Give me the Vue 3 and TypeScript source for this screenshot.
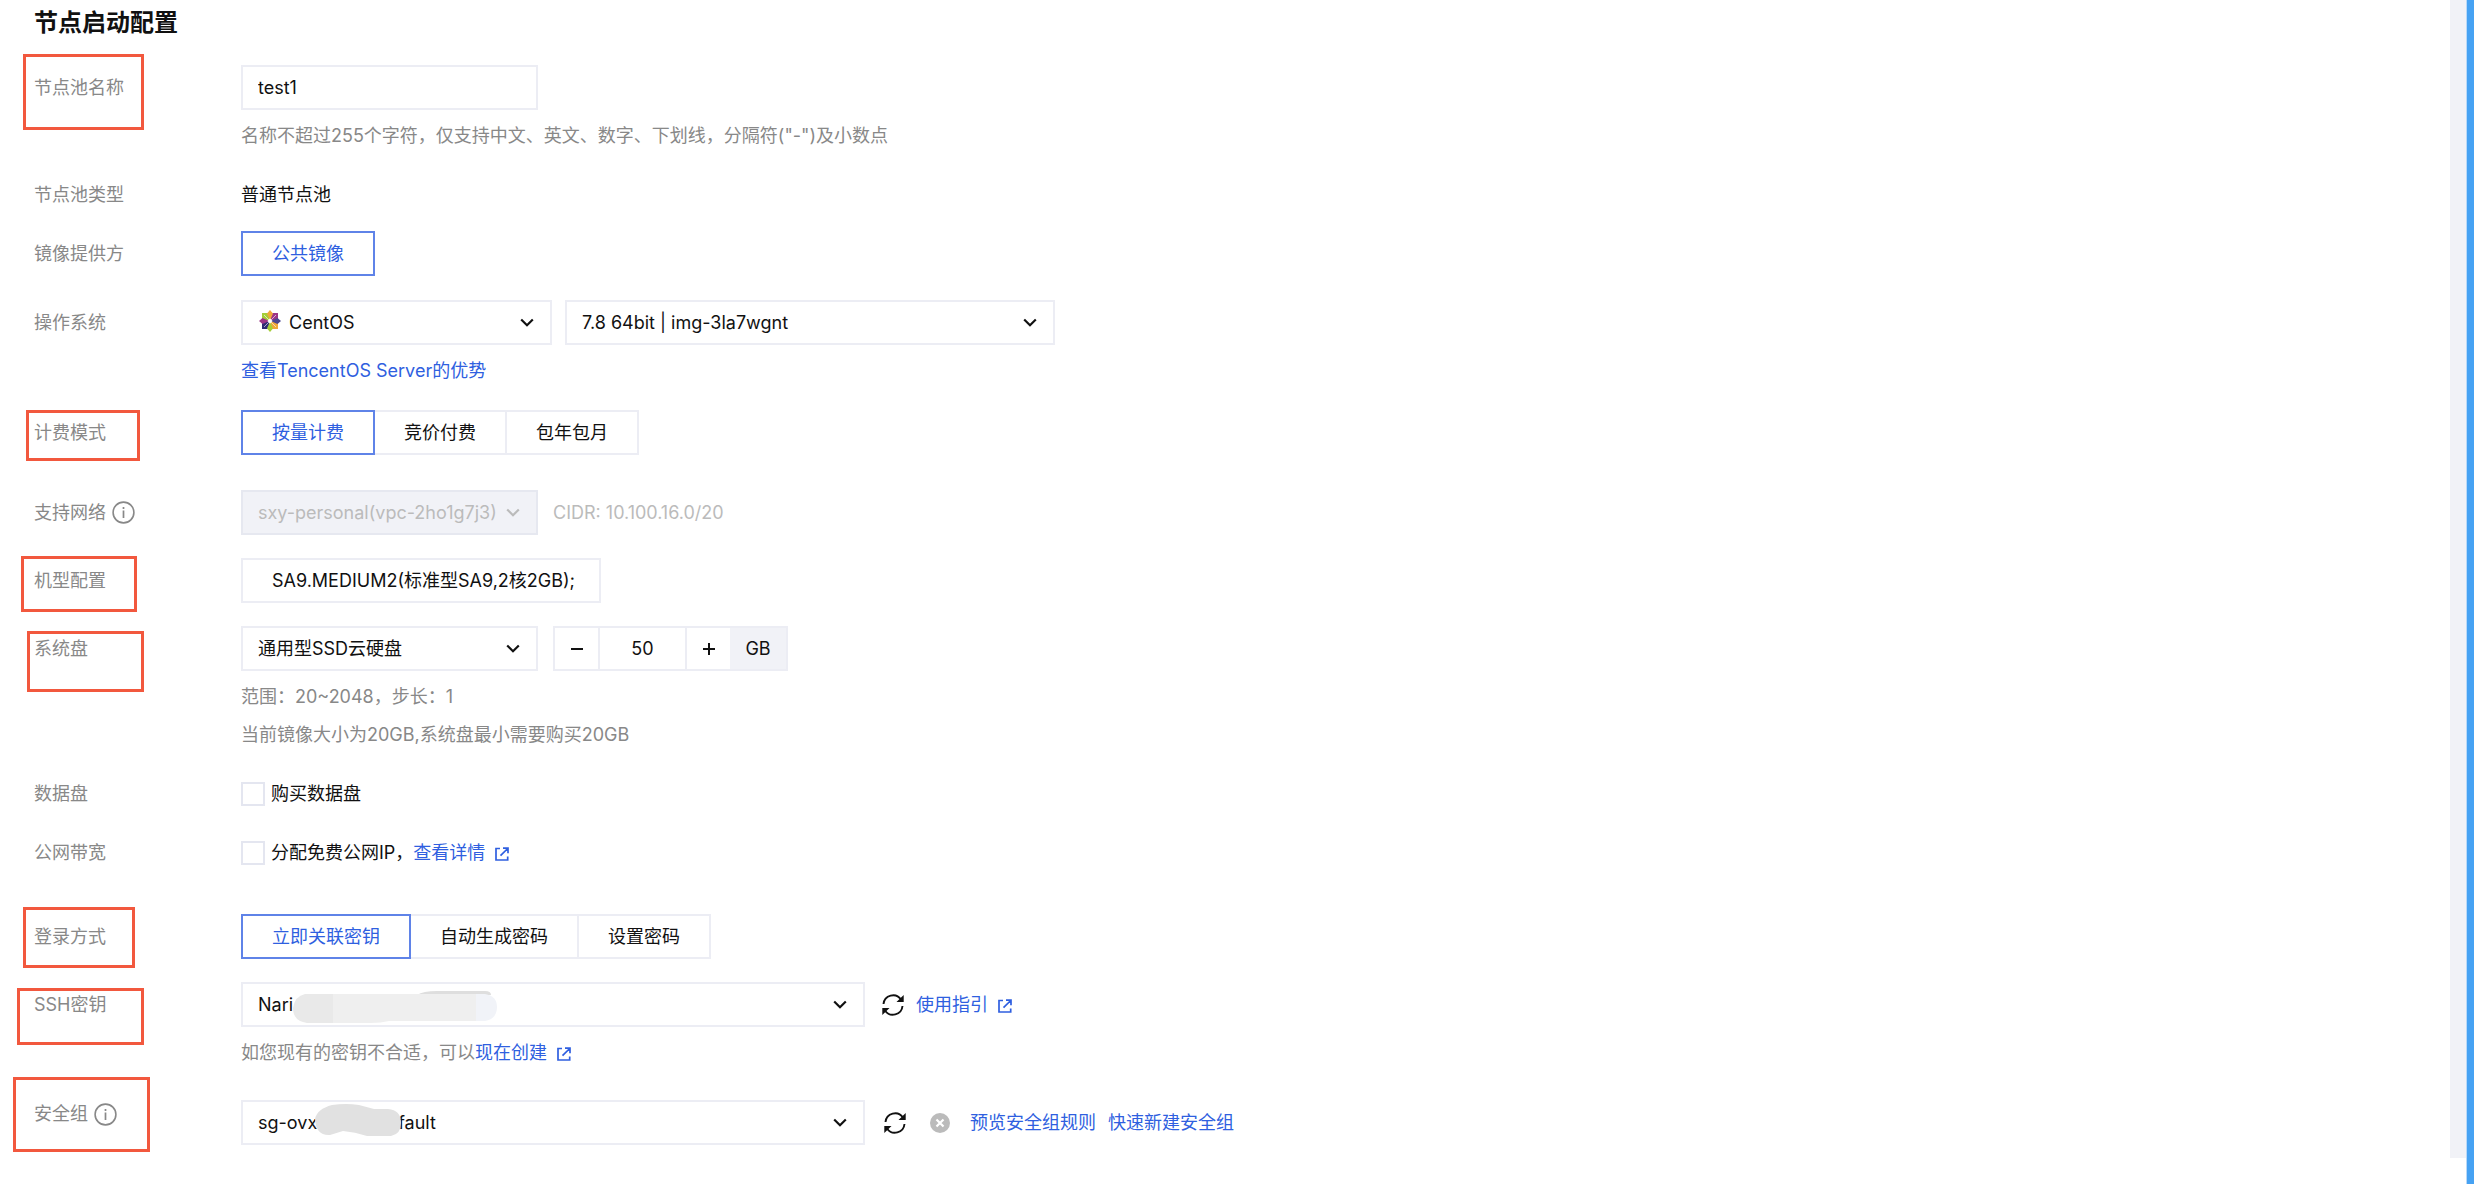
<script setup lang="ts">
import { ref } from 'vue'

interface Mark {
  left: number
  top: number
  width: number
  height: number
}

const poolName = ref('test1')
const diskSize = ref('50')
const billing = ref('按量计费')
const login = ref('立即关联密钥')
const buyDisk = ref(false)
const publicIp = ref(false)

const billingModes: string[] = ['按量计费', '竞价付费', '包年包月']
const loginModes: string[] = ['立即关联密钥', '自动生成密码', '设置密码']

const securityGroup = 'sg-ovx' + '\u00a0'.repeat(16) + 'fault'

// Red frames drawn over the labels that need attention
const marks: Mark[] = [
  { left: 23, top: 54, width: 121, height: 76 },
  { left: 26, top: 410, width: 114, height: 51 },
  { left: 21, top: 556, width: 116, height: 56 },
  { left: 27, top: 631, width: 117, height: 61 },
  { left: 23, top: 907, width: 112, height: 61 },
  { left: 17, top: 988, width: 127, height: 57 },
  { left: 13, top: 1077, width: 137, height: 75 },
]

function step(delta: number): void {
  const next = Number(diskSize.value) + delta
  diskSize.value = String(Math.min(2048, Math.max(20, next)))
}
</script>

<template>
  <div class="page">
    <svg class="defs" aria-hidden="true">
      <symbol id="chevron" viewBox="0 0 14 9">
        <path d="M1.2 1.5 7 7.2l5.800-5.700" fill="none" stroke="currentColor" stroke-width="2.200" />
      </symbol>
      <symbol id="info" viewBox="0 0 23 23">
        <circle cx="11.500" cy="11.500" r="10.400" fill="none" stroke="currentColor" stroke-width="1.600" />
        <path d="M11.500 9.500v7.500M11.500 6v2" fill="none" stroke="currentColor" stroke-width="1.700" />
      </symbol>
      <symbol id="external" viewBox="0 0 14 14">
        <path d="M5 1.500H1v11.500h11.700V9.500M8 1.200h5v5M12.700 1.500 5.500 8.700" fill="none" stroke="currentColor" stroke-width="1.700" />
      </symbol>
      <symbol id="refresh" viewBox="0 0 22 22">
        <path d="M1.500 10a9.600 9.600 0 0 1 17.500-4.500M20.500 12a9.600 9.600 0 0 1-17.500 4.500" fill="none" stroke="currentColor" stroke-width="1.900" />
        <path d="M21.700 1v7h-7.200ZM.3 21v-7h7.200Z" fill="currentColor" />
      </symbol>
      <symbol id="clear" viewBox="0 0 20 20">
        <circle cx="10" cy="10" r="10" fill="#bbbbbb" />
        <path d="m6.500 6.500 7 7m0-7-7 7" fill="none" stroke="#fff" stroke-width="2.200" />
      </symbol>
    </svg>

    <main class="content">
      <h1 class="title">节点启动配置</h1>

      <form class="form" @submit.prevent>
        <div class="row">
          <label class="label" for="pool-name">节点池名称</label>
          <div class="field">
            <input id="pool-name" v-model="poolName" class="box w-medium" type="text" />
            <p class="hint">名称不超过255个字符，仅支持中文、英文、数字、下划线，分隔符("-")及小数点</p>
          </div>
        </div>

        <div class="row gap-lg">
          <span class="label label-text">节点池类型</span>
          <div class="field"><p class="value">普通节点池</p></div>
        </div>

        <div class="row gap-md">
          <span id="provider" class="label">镜像提供方</span>
          <div class="field">
            <div class="segment" role="group" aria-labelledby="provider">
              <button type="button" class="seg active">公共镜像</button>
            </div>
          </div>
        </div>

        <div class="row gap-md">
          <label class="label" for="os">操作系统</label>
          <div class="field">
            <div class="line">
              <span class="select w-os">
                <svg class="os-logo" viewBox="0 0 22 22" aria-hidden="true">
                  <path d="M3 3h7.500v7.500H3z" fill="#a5cd39" />
                  <path d="M11.500 3H19v7.500h-7.500z" fill="#9c3587" />
                  <path d="M11.500 11.500H19V19h-7.500z" fill="#efa83a" />
                  <path d="M3 11.500h7.500V19H3z" fill="#2f2b75" />
                  <path d="m11 0 3 3.500-3 7-3-7z" fill="#efa83a" />
                  <path d="m22 11-3.500 3-7-3 7-3z" fill="#4b4690" />
                  <path d="m11 22-3-3.500 3-7 3 7z" fill="#a5cd39" />
                  <path d="m0 11 3.500-3 7 3-7 3z" fill="#9c3587" />
                  <path d="m5 5 12 12M17 5 5 17" stroke="#fff" stroke-width="1" opacity=".6" />
                  <path d="m11 8.500 2.500 2.500-2.500 2.500L8.500 11z" fill="#fff" />
                </svg>
                <select id="os" class="box with-logo"><option>CentOS</option></select>
                <svg class="chevron"><use href="#chevron" /></svg>
              </span>
              <span class="select w-version">
                <select class="box" aria-label="系统版本"><option>7.8 64bit | img-3la7wgnt</option></select>
                <svg class="chevron"><use href="#chevron" /></svg>
              </span>
            </div>
            <p class="hint"><a href="#">查看TencentOS Server的优势</a></p>
          </div>
        </div>

        <div class="row gap-mid">
          <span id="billing" class="label">计费模式</span>
          <div class="field">
            <div class="segment" role="group" aria-labelledby="billing">
              <button
                v-for="mode in billingModes"
                :key="mode"
                type="button"
                class="seg"
                :class="{ active: billing === mode }"
                @click="billing = mode"
              >{{ mode }}</button>
            </div>
          </div>
        </div>

        <div class="row gap-lg">
          <label class="label" for="network">支持网络<svg class="info"><use href="#info" /></svg></label>
          <div class="field">
            <div class="line line-wide">
              <span class="select w-medium">
                <select id="network" class="box" disabled><option>sxy-personal(vpc-2ho1g7j3)</option></select>
                <svg class="chevron muted"><use href="#chevron" /></svg>
              </span>
              <span class="muted">CIDR: 10.100.16.0/20</span>
            </div>
          </div>
        </div>

        <div class="row gap-sm">
          <span id="machine" class="label">机型配置</span>
          <div class="field">
            <div class="segment">
              <button type="button" class="seg seg-machine" aria-describedby="machine">SA9.MEDIUM2(标准型SA9,2核2GB);</button>
            </div>
          </div>
        </div>

        <div class="row gap-sm">
          <label class="label" for="disk">系统盘</label>
          <div class="field">
            <div class="line line-wide">
              <span class="select w-medium">
                <select id="disk" class="box"><option>通用型SSD云硬盘</option></select>
                <svg class="chevron"><use href="#chevron" /></svg>
              </span>
              <div class="stepper">
                <button type="button" class="step" aria-label="减少" @click="step(-1)">
                  <svg viewBox="0 0 12 12"><path d="M0 6h12" stroke="currentColor" stroke-width="2" /></svg>
                </button>
                <input v-model="diskSize" class="amount" type="text" aria-label="系统盘大小" />
                <button type="button" class="step" aria-label="增加" @click="step(1)">
                  <svg viewBox="0 0 12 12"><path d="M0 6h12M6 0v12" stroke="currentColor" stroke-width="2" /></svg>
                </button>
                <span class="unit">GB</span>
              </div>
            </div>
            <p class="hint">范围：20~2048，步长：1</p>
            <p class="hint">当前镜像大小为20GB,系统盘最小需要购买20GB</p>
          </div>
        </div>

        <div class="row gap-lg">
          <span class="label label-text">数据盘</span>
          <div class="field">
            <label class="check"><input v-model="buyDisk" type="checkbox" />购买数据盘</label>
          </div>
        </div>

        <div class="row gap-lg">
          <span class="label label-text">公网带宽</span>
          <div class="field check-line">
            <label class="check"><input v-model="publicIp" type="checkbox" />分配免费公网IP，</label>
            <a href="#">查看详情<svg class="external"><use href="#external" /></svg></a>
          </div>
        </div>

        <div class="row gap-xl">
          <span id="login" class="label">登录方式</span>
          <div class="field">
            <div class="segment" role="group" aria-labelledby="login">
              <button
                v-for="mode in loginModes"
                :key="mode"
                type="button"
                class="seg"
                :class="{ active: login === mode }"
                @click="login = mode"
              >{{ mode }}</button>
            </div>
          </div>
        </div>

        <div class="row gap-sm">
          <label class="label" for="ssh">SSH密钥</label>
          <div class="field">
            <div class="line">
              <span class="select w-large">
                <select id="ssh" class="box"><option>Nari</option></select>
                <svg class="smudge smudge-key" viewBox="0 0 206 34" aria-hidden="true">
                  <path d="M126 5q6-4 20-4h48q6 0 6 4z" fill="#dedede" />
                  <path d="M14 4h29v29H16Q2 31 2 18 4 6 14 4z" fill="#e9e9e9" />
                  <path d="M42 4h144v27h-88q-8 2-18 2H42z" fill="#efefef" />
                  <path d="M185 4h9q12 2 12 13 0 12-12 14h-9z" fill="#f1f3f8" />
                </svg>
                <svg class="chevron"><use href="#chevron" /></svg>
              </span>
              <div class="actions">
                <button type="button" class="icon-btn" aria-label="刷新密钥"><svg class="refresh"><use href="#refresh" /></svg></button>
                <a href="#">使用指引<svg class="external"><use href="#external" /></svg></a>
              </div>
            </div>
            <p class="hint">如您现有的密钥不合适，可以<a href="#">现在创建<svg class="external"><use href="#external" /></svg></a></p>
          </div>
        </div>

        <div class="row gap-lg">
          <label class="label label-raised" for="group">安全组<svg class="info"><use href="#info" /></svg></label>
          <div class="field">
            <div class="line">
              <span class="select w-large">
                <select id="group" class="box"><option>{{ securityGroup }}</option></select>
                <svg class="smudge smudge-group" viewBox="0 0 86 32" aria-hidden="true">
                  <path d="M0 15Q2 5 17 1q14-2 27 0l15 4h14q13 1 13 14 0 11-10 13H52q-12-4-24-5l-13 4Q1 32 0 15z" fill="#e1e1e1" />
                </svg>
                <svg class="chevron"><use href="#chevron" /></svg>
              </span>
              <div class="actions actions-wide">
                <button type="button" class="icon-btn" aria-label="刷新安全组"><svg class="refresh"><use href="#refresh" /></svg></button>
                <button type="button" class="icon-btn clear" aria-label="移除"><svg class="clear-icon"><use href="#clear" /></svg></button>
                <span class="links">
                  <a href="#">预览安全组规则</a>
                  <a href="#">快速新建安全组</a>
                </span>
              </div>
            </div>
          </div>
        </div>
      </form>
    </main>

    <div class="gutter"></div>
    <div class="edge"></div>

    <span
      v-for="(mark, i) in marks"
      :key="i"
      class="mark"
      :style="{ left: mark.left + 'px', top: mark.top + 'px', width: mark.width + 'px', height: mark.height + 'px' }"
    ></span>
  </div>
</template>

<style>
body {
  margin: 0;
  background: #fff;
}
</style>

<style scoped>
.page {
  position: relative;
  display: flex;
  min-height: 100vh;
  box-sizing: border-box;
  font-family: Inter, "Noto Sans CJK SC", sans-serif;
  font-size: 18px;
  line-height: 24px;
  color: #111;
}

.page * {
  box-sizing: border-box;
}

.defs {
  position: absolute;
  width: 0;
  height: 0;
}

.content {
  flex: 1;
  padding: 5px 34px 24px;
}

.gutter {
  width: 16px;
  margin-bottom: 26px;
  background: #f1f2f7;
}

.edge {
  width: 8px;
  border-left: 1px solid #b9d9f8;
  background: #46a2f3;
}

.title {
  margin: 0 0 24px;
  font-size: 24px;
  line-height: 36px;
  font-weight: 700;
}

.row {
  display: grid;
  grid-template-columns: 207px 1fr;
}

.gap-sm { margin-top: 23px; }
.gap-md { margin-top: 24px; }
.gap-mid { margin-top: 27px; }
.gap-lg { margin-top: 35px; }
.gap-xl { margin-top: 49px; }

.label {
  display: flex;
  align-items: center;
  align-self: start;
  gap: 6px;
  height: 45px;
  color: #888;
}

.label-text { height: 24px; }
.label-raised { height: 28px; }

.info {
  width: 23px;
  height: 23px;
}

.value,
.hint {
  margin: 0;
}

.hint {
  margin-top: 14px;
  color: #888;
}

a {
  color: #2f5fe0;
  text-decoration: none;
}

button,
input,
select {
  margin: 0;
  font: inherit;
  color: inherit;
}

.box {
  display: block;
  width: 100%;
  height: 45px;
  padding: 0 15px;
  border: 2px solid #ecedf4;
  border-radius: 0;
  background: #fff;
  appearance: none;
  outline: none;
}

.box:disabled {
  background: #f1f2f7;
  border-color: #e6e8f0;
  color: #bbb;
  opacity: 1;
}

.with-logo { padding-left: 46px; }

.w-medium { width: 297px; }
.w-os { width: 311px; }
.w-version { width: 490px; }
.w-large { width: 624px; }

.line {
  display: flex;
  align-items: center;
  gap: 13px;
}

.line-wide { gap: 15px; }

.select {
  position: relative;
  display: block;
}

.chevron {
  position: absolute;
  right: 18px;
  top: 18px;
  width: 14px;
  height: 9px;
  pointer-events: none;
}

.muted { color: #bbb; }

.os-logo {
  position: absolute;
  left: 18px;
  top: 10px;
  width: 22px;
  height: 22px;
}

.smudge {
  position: absolute;
  pointer-events: none;
}

.smudge-key {
  left: 50px;
  top: 8px;
  width: 206px;
  height: 34px;
}

.smudge-group {
  left: 74px;
  top: 4px;
  width: 86px;
  height: 32px;
}

.segment {
  display: flex;
}

.seg {
  height: 45px;
  padding: 0 29px;
  border: 2px solid #ecedf4;
  background: #fff;
  white-space: nowrap;
}

.seg + .seg { margin-left: -2px; }

.seg.active {
  position: relative;
  border-color: #5f83e8;
  color: #2f5fe0;
}

.seg-machine {
  width: 360px;
  padding-right: 0;
  text-align: left;
}

.stepper {
  display: flex;
  height: 45px;
  border: 2px solid #ecedf4;
}

.step {
  display: flex;
  align-items: center;
  justify-content: center;
  width: 43px;
  padding: 0;
  border: 0;
  background: #fff;
}

.step svg {
  width: 12px;
  height: 12px;
}

.amount {
  width: 89px;
  padding: 0;
  border: 2px solid #ecedf4;
  border-width: 0 2px;
  text-align: center;
  outline: none;
}

.unit {
  width: 56px;
  line-height: 41px;
  text-align: center;
  background: #f1f2f7;
}

.check-line { display: flex; }

.check {
  display: flex;
  align-items: center;
  gap: 6px;
}

.check input {
  width: 24px;
  height: 24px;
  border: 2px solid #e4e6f0;
  background: #fff;
  appearance: none;
}

.check input:checked { background: #2f5fe0; }

.external {
  width: 14px;
  height: 14px;
  margin-left: 10px;
  vertical-align: -2px;
}

.actions {
  display: flex;
  align-items: center;
  gap: 12px;
  padding-left: 4px;
}

.actions-wide {
  gap: 20px;
  padding-left: 6px;
}

.icon-btn {
  display: flex;
  padding: 0;
  border: 0;
  background: none;
}

.clear { padding-left: 4px; }

.links {
  display: flex;
  gap: 12px;
}

.refresh {
  width: 22px;
  height: 22px;
}

.clear-icon {
  width: 20px;
  height: 20px;
}

.mark {
  position: absolute;
  border: 3px solid #f2583e;
  pointer-events: none;
}
</style>
